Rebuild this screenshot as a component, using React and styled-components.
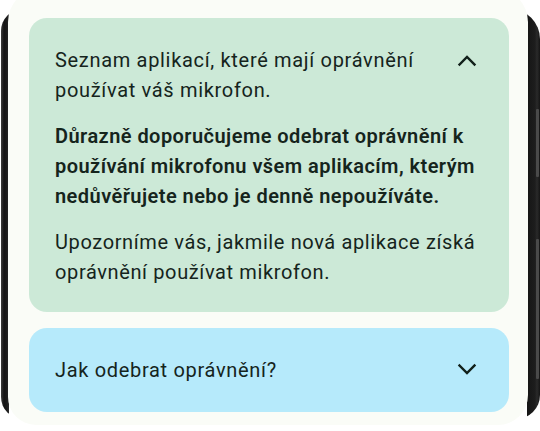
import React from "react";
import styled, { createGlobalStyle } from "styled-components";

const Global = createGlobalStyle`
  html, body { margin: 0; padding: 0; background: #ffffff; }
  body { font-family: Roboto, "Noto Sans", "Liberation Sans", sans-serif; -webkit-font-smoothing: antialiased; }
  * { box-sizing: border-box; }
`;

const Screen = styled.div`
  width: 540px;
  height: 431px;
  overflow: hidden;
  display: grid;
  grid-template: 1fr / 1fr;
  background: #ffffff;
`;

const Frame = styled.div`
  grid-area: 1 / 1;
  margin: 9px 0 12px 1px;
  border-radius: 22px 30px 24px 22px;
  background: linear-gradient(90deg, #3c3c3c 0, #151515 3px, #1c1c1c 6px, #2b2b2b 8px, transparent 8px, transparent calc(100% - 13px), #151515 calc(100% - 13px), #1d1d1d calc(100% - 5px), #2a2a2a calc(100% - 3px), #151515 100%);
  display: flex;
  justify-content: flex-end;
`;

const SideButton = styled.div`
  width: 3px;
  height: ${(p) => p.$h}px;
  margin-top: ${(p) => p.$top}px;
  background: #4a4a4a;
  border-radius: 1px;
`;

const ButtonRail = styled.div`
  display: flex;
  flex-direction: column;
  margin-right: 1px;
`;

const Sheet = styled.div`
  grid-area: 1 / 1;
  margin: -12px 12px 6px 8px;
  background: #fafcf7;
  border-radius: 34px 34px 30px 28px;
  padding: 30px 19px 0 21px;
  display: flex;
  flex-direction: column;
  gap: 16px;
  position: relative;
  z-index: 1;
`;

const Card = styled.div`
  background: ${(p) => p.$bg};
  border-radius: 18px;
  padding: ${(p) => (p.$compact ? "27px 26px 27px 26px" : "27px 26px 25px 26px")};
  color: #15241c;
`;

const Header = styled.div`
  display: flex;
  align-items: flex-start;
  justify-content: space-between;
  gap: 16px;
`;

const Title = styled.div`
  font-size: 20px;
  line-height: 30px;
  letter-spacing: 0.68px;
  color: #15241c;
  max-width: 392px;
`;

const Chevron = styled.div`
  width: 24px;
  height: 24px;
  margin-top: ${(p) => p.$mt}px;
  margin-right: 4px;
  flex-shrink: 0;
  color: #11201a;
  display: flex;
`;

const Body = styled.p`
  margin: ${(p) => p.$mt}px 0 0 0;
  font-size: 20px;
  line-height: 30px;
  letter-spacing: ${(p) => (p.$bold ? "0.45px" : "0.62px")};
  font-weight: ${(p) => (p.$bold ? 600 : 400)};
  color: #15241c;
`;

const Up = () => (
  <svg width="24" height="24" viewBox="0 0 24 24" fill="none">
    <path d="M4.5 16.5 L12 9 L19.5 16.5" stroke="currentColor" strokeWidth="2.4" strokeLinecap="square" />
  </svg>
);

const Down = () => (
  <svg width="24" height="24" viewBox="0 0 24 24" fill="none">
    <path d="M4.5 8.5 L12 16 L19.5 8.5" stroke="currentColor" strokeWidth="2.4" strokeLinecap="square" />
  </svg>
);

export default function App() {
  return (
    <>
      <Global />
      <Screen>
        <Frame>
          <ButtonRail>
            <SideButton $top={100} $h={68} />
            <SideButton $top={62} $h={140} />
          </ButtonRail>
        </Frame>
        <Sheet>
          <Card $bg="#cce9d7">
            <Header>
              <Title>Seznam aplikací, které mají oprávnění používat váš mikrofon.</Title>
              <Chevron $mt={3}>
                <Up />
              </Chevron>
            </Header>
            <Body $bold $mt={16}>
              Důrazně doporučujeme odebrat oprávnění k používání mikrofonu všem aplikacím, kterým nedůvěřujete nebo je denně nepoužíváte.
            </Body>
            <Body $mt={16}>
              Upozorníme vás, jakmile nová aplikace získá oprávnění používat mikrofon.
            </Body>
          </Card>
          <Card $bg="#b6eafb" $compact>
            <Header>
              <Title>Jak odebrat oprávnění?</Title>
              <Chevron $mt={2}>
                <Down />
              </Chevron>
            </Header>
          </Card>
        </Sheet>
      </Screen>
    </>
  );
}
